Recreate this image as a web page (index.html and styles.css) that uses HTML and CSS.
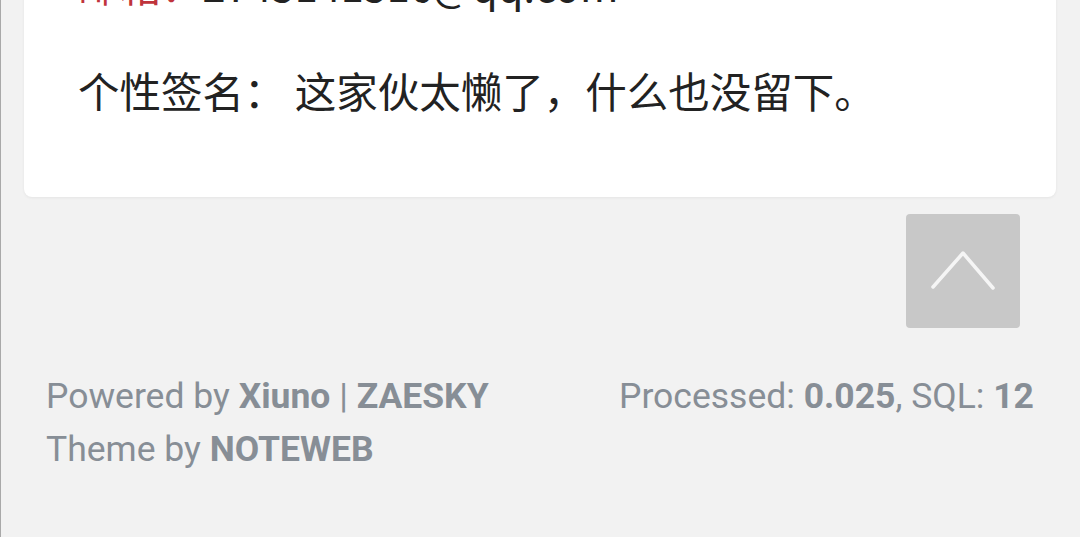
FILE: index.html
```html
<!DOCTYPE html>
<html lang="zh-CN">
<head>
  <meta charset="UTF-8" />
  <meta name="viewport" content="width=device-width, initial-scale=1.0" />
  <title>个人资料</title>
  <link rel="stylesheet" href="styles.css">
</head>
<body>
  <div class="card">
    <div class="row"><span class="label">邮箱：</span>2745141516@qq.com</div>
    <div class="row"><span>个性签名：</span> 这家伙太懒了，什么也没留下。</div>
  </div>

  <div class="totop-wrap">
    <a class="totop" href="#">
      <svg width="114" height="114" viewBox="0 0 114 114">
        <polyline points="27,73 57,39 87,74" />
      </svg>
    </a>
  </div>

  <footer class="footer">
    <div class="footer-left">
      <div>Powered by <b>Xiuno</b> | <b>ZAESKY</b></div>
      <div>Theme by <b>NOTEWEB</b></div>
    </div>
    <div class="footer-right">
      Processed: <b>0.025</b>, SQL: <b>12</b>
    </div>
  </footer>
</body>
</html>
```

FILE: styles.css
```css
body {
  margin: 0;
  height: 537px;
  overflow: hidden;
  background-color: #f2f2f2;
  border-left: 1px solid #a9a9a9;
  font-family: Roboto, "Noto Sans CJK SC", sans-serif;
}

.card {
  margin: -85px 24px 0 23px;
  padding: 40px 54px 78px;
  background-color: #fff;
  border-radius: 8px;
  box-shadow: 0 1px 3px rgba(0, 0, 0, 0.06);
  display: flex;
  flex-direction: column;
  gap: 48px;
  color: #222;
  font-family: "Noto Sans CJK SC", sans-serif;
  font-size: 41.5px;
  line-height: 58px;
}

.label {
  color: #c0343c;
}

.totop-wrap {
  display: flex;
  justify-content: flex-end;
  padding: 17px 60px 0 0;
}

.totop {
  display: block;
  width: 114px;
  height: 114px;
  background-color: #c8c8c8;
  border-radius: 4px;
}

.totop svg {
  display: block;
}

.totop polyline {
  fill: none;
  stroke: #f5f5f5;
  stroke-width: 3.5;
  stroke-linecap: round;
  stroke-linejoin: round;
}

.footer {
  display: flex;
  justify-content: space-between;
  padding: 42px 46px 0 45px;
  color: #878e96;
  font-size: 35.5px;
  line-height: 53px;
}

.footer b {
  font-weight: 700;
}
```
